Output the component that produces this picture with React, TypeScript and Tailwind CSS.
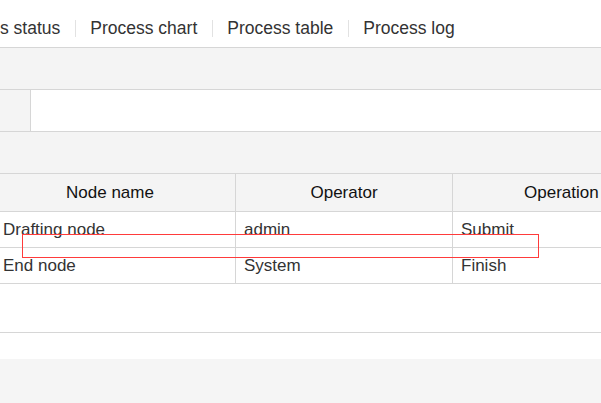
const tabs = ["Process status", "Process chart", "Process table", "Process log"]

const rows = [
    { node: "Drafting node", operator: "admin", operation: "Submit" },
    { node: "End node", operator: "System", operation: "Finish" },
]

export default function App() {
    return (
        <div className="relative flex h-[403px] w-[601px] flex-col overflow-hidden bg-white font-['Liberation_Sans',Arial,sans-serif]">
            {/* tab bar */}
            <div className="flex h-[48px] shrink-0 items-start border-b border-[#d6d6d6] pt-[17px]">
                <div className="-ml-[69px] flex items-center">
                    {tabs.map((t, i) => (
                        <div key={t} className="flex items-center">
                            {i > 0 && <div className="h-[17px] w-px bg-[#e2e2e2]" />}
                            <span className="whitespace-nowrap px-[14.5px] text-[17.5px] leading-[22px] text-[#333]">{t}</span>
                        </div>
                    ))}
                </div>
            </div>

            <div className="h-[42px] shrink-0 border-b border-[#d6d6d6] bg-[#f4f4f4]" />

            <div className="flex h-[42px] shrink-0 border-b border-[#d6d6d6]">
                <div className="w-[31px] border-r border-[#d6d6d6] bg-[#f4f4f4]" />
                <div className="flex-1 bg-white" />
            </div>

            <div className="h-[42px] shrink-0 border-b border-[#d6d6d6] bg-[#f4f4f4]" />

            {/* table */}
            <div className="-ml-[15px] w-[720px] shrink-0">
                <div className="grid h-[38px] grid-cols-[251px_217px_252px] border-b border-[#d6d6d6] bg-[#f4f4f4] text-[17px] text-[#111]">
                    <div className="flex items-center justify-center border-r border-[#d6d6d6]">Node name</div>
                    <div className="flex items-center justify-center border-r border-[#d6d6d6]">Operator</div>
                    <div className="flex items-center justify-start pl-[71px]">Operation</div>
                </div>
                {rows.map((r) => (
                    <div key={r.node} className="grid h-[36px] grid-cols-[251px_217px_252px] border-b border-[#d6d6d6] text-[17px] text-[#333]">
                        <div className="flex items-center border-r border-[#d6d6d6] pl-[18px]">{r.node}</div>
                        <div className="flex items-center border-r border-[#d6d6d6] pl-[8px]">{r.operator}</div>
                        <div className="flex items-center pl-[8px]">{r.operation}</div>
                    </div>
                ))}
            </div>

            <div className="h-[49px] shrink-0 border-b border-[#d6d6d6]" />
            <div className="h-[26px] shrink-0" />
            <div className="flex-1 bg-[#f5f5f5]" />

            {/* selection box */}
            <div className="absolute left-[22px] top-[234px] h-[24px] w-[517px] border border-[#ff3b3b]" />
        </div>
    )
}
